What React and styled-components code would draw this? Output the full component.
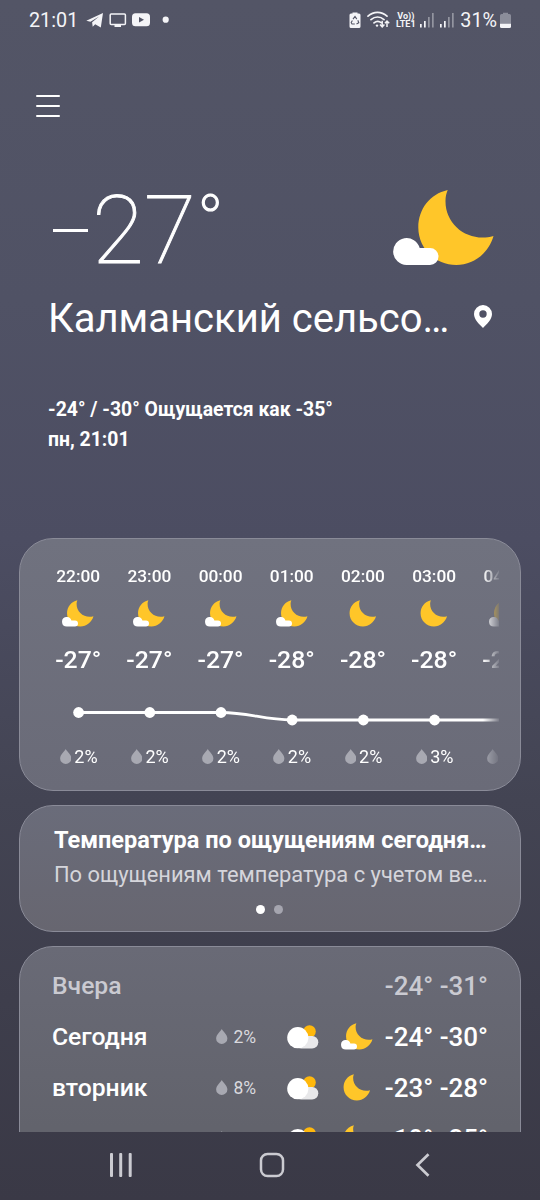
import React from 'react';
import styled, { createGlobalStyle } from 'styled-components';

const hours = [
  { time: '22:00', icon: 'cloudMoon', temp: '-27°', rain: '2%' },
  { time: '23:00', icon: 'cloudMoon', temp: '-27°', rain: '2%' },
  { time: '00:00', icon: 'cloudMoon', temp: '-27°', rain: '2%' },
  { time: '01:00', icon: 'cloudMoon', temp: '-28°', rain: '2%' },
  { time: '02:00', icon: 'moon', temp: '-28°', rain: '2%' },
  { time: '03:00', icon: 'moon', temp: '-28°', rain: '3%' },
  { time: '04:00', icon: 'cloudMoon', temp: '-28°', rain: '3%' }
];

const days = [
  { name: 'Вчера', high: '-24°', low: '-31°', past: true },
  { name: 'Сегодня', rain: '2%', night: 'cloudMoon', high: '-24°', low: '-30°' },
  { name: 'вторник', rain: '8%', night: 'moon', high: '-23°', low: '-28°' },
  { name: 'среда', rain: '6%', night: 'moon', high: '-19°', low: '-25°' }
];

const MOON =
  'M54.7 0C37 4 25.3 19 25.3 37.5c0 21 17 37.5 38 37.5 17.5 0 32.5-12 37.2-29-24 7-48.5-10-48-35.5C52.5 7 53.2 3.5 54.7 0z';
const CLOUD =
  'M13.5 75A13.5 13.5 0 1 1 26.7 58H37a8.5 8.5 0 0 1 0 17z';

const BigMoon = () => (
  <svg width="102" height="76" viewBox="0 0 102 76">
    <path fill="#ffc629" d={MOON} />
    <path fill="#fff" d={CLOUD} />
  </svg>
);

// on the small icon the cloud sits closer to the moon
const Moon = ({ cloud }) => (
  <svg width="32" height="27" viewBox="11 0 91 76">
    <path
      transform={cloud ? undefined : 'translate(-7 0)'}
      fill="#ffc629"
      d={MOON}
    />
    {cloud && <path transform="translate(11 0)" fill="#fff" d={CLOUD} />}
  </svg>
);

const SunCloud = () => (
  <svg width="32" height="24" viewBox="0 0 32 24">
    <circle cx="22.5" cy="6.5" r="6.3" fill="#ffb80c" />
    <rect x="8" y="11" width="23.3" height="12.5" rx="6.2" fill="#e8e8ea" />
    <circle cx="10.8" cy="12.7" r="10.6" fill="#fff" />
  </svg>
);

const Drop = () => (
  <svg width="11.5" height="15" viewBox="0 0 12 16">
    <path
      fill="#a8a9b2"
      d="M6 0c.8 2 6 6 6 10a6 6 0 0 1-12 0c0-4 5.2-8 6-10z"
    />
  </svg>
);

const StatusIcons = () => (
  <svg width="86" height="20" viewBox="0 0 86 20" fill="#f4f4f7">
    <path d="M.3 10.800 17 3l-2.200 14.400-5.600-3.200-2.500 2.600-.6-4.600 7-5.700-8.700 5.300z" />
    <rect
      x="24.2"
      y="4"
      width="15.200"
      height="10.600"
      rx="1"
      fill="none"
      stroke="#f4f4f7"
      strokeWidth="1.5"
    />
    <path d="M28.5 15h6.500v2h-6.500z" />
    <rect x="46" y="3.200" width="18" height="13" rx="3.500" />
    <path d="m53 7 5 2.700-5 2.700z" fill="#535566" />
    <circle cx="79.700" cy="9.700" r="3.100" />
  </svg>
);

const Wifi = () => (
  <svg width="23" height="18" viewBox="0 0 23 18" fill="none" stroke="#f4f4f7">
    <g strokeWidth="1.7" strokeLinecap="round">
      <path d="M1 5.200C6.500.2 14.500.2 20 5.200M4 8.700c4-3.600 9.200-3.600 13 0M7 11.900c2.400-2 5-2 7.200-.2" />
    </g>
    <circle cx="10" cy="14.6" r="1.2" fill="#f4f4f7" stroke="none" />
    <path
      strokeWidth="1.5"
      d="M15.200 9.800v6M13 13.600l2.200 2.400 2.200-2.400M20 16v-5.800M17.900 12.300 20 10l2.200 2.300"
    />
  </svg>
);

const Battery = () => (
  <svg width="11" height="17" viewBox="0 0 11 17">
    <path fill="#8b8d9a" d="M3 2V.8h5V2h1.500Q11 2 11 3.500V11H0V3.500Q0 2 1.500 2z" />
    <path fill="#f4f4f7" d="M0 11.500h11v3q0 1.500-1.500 1.500h-8Q0 16 0 14.500z" />
  </svg>
);

const App = () => {
  return (
    <Screen>
      <GlobalStyle />
      <StatusBar>
        <Clock>21:01</Clock>
        <StatusIcons />
        <Spacer />
        <StatusIcon width="12" height="17" viewBox="0 0 12 17">
          <path
            fill="#f4f4f7"
            d="M3.500 1.500V.5h5v1H10q1.500 0 1.500 1.500v11.500Q11.500 16 10 16H2Q.5 16 .5 14.500V3Q.5 1.500 2 1.500z"
          />
          <path
            fill="none"
            stroke="#535566"
            strokeWidth="1.1"
            d="m4 7.200 2-2.700 1.800 2.600M8.800 8.300l1 2.400-2.300 1.300M5.800 12H3l-.8-1.500 1.200-2"
          />
        </StatusIcon>
        <Wifi />
        <Volte>
          <span>Vo))</span>
          <span>LTE1</span>
        </Volte>
        {[1, 2].map(sim => (
          <StatusIcon key={sim} width="14" height="16" viewBox="0 0 14 16" fill="#f4f4f7">
            <path d="M0 12h1.700v3.500H0zM4 9h1.700v6.500H4z" />
            <path opacity=".4" d="M8 5h1.700v10.500H8zM12 1h1.700v14.500H12z" />
          </StatusIcon>
        ))}
        <Percent>31%</Percent>
        <Battery />
      </StatusBar>

      <MenuButton aria-label="Меню">
        <MenuLine />
        <MenuLine />
        <MenuLine />
      </MenuButton>

      <Current>
        <Degrees>
          <Minus />
          <div>
            27<DegreeSign>°</DegreeSign>
          </div>
        </Degrees>
        <BigMoon />
      </Current>
      <Place>
        <City>Калманский сельсо…</City>
        <Pin width="18" height="23" viewBox="0 0 18 23">
          <path
            fill="#fff"
            fillRule="evenodd"
            d="M9 0a9 9 0 0 1 9 9c0 5.500-5.500 10.500-9 14C5.500 19.500 0 14.500 0 9a9 9 0 0 1 9-9zm0 5.300a3.700 3.700 0 1 0 0 7.400 3.700 3.700 0 0 0 0-7.400z"
          />
        </Pin>
      </Place>
      <Details>
        <div>-24° / -30° Ощущается как -35°</div>
        <div>пн, 21:01</div>
      </Details>

      <Cards>
        <HourlyCard>
          <HourlyView>
            <HourRow $height={22}>
              {hours.map(h => (
                <HourTime key={h.time}>{h.time}</HourTime>
              ))}
            </HourRow>
            <HourRow $height={54}>
              {hours.map(h => (
                <HourCell key={h.time}>
                  <Moon cloud={h.icon === 'cloudMoon'} />
                </HourCell>
              ))}
            </HourRow>
            <HourRow $height={38}>
              {hours.map(h => (
                <HourTemp key={h.time}>{h.temp}</HourTemp>
              ))}
            </HourRow>
            <svg width="499" height="61" viewBox="0 0 499 61">
              <path
                d="M35.600 33.500H178c28 0 43 7.500 71.200 7.500H499"
                fill="none"
                stroke="#fff"
                strokeWidth="2.8"
              />
              {hours.map((h, i) => (
                <circle
                  key={h.time}
                  cx={35.6 + i * 71.2}
                  cy={h.temp === '-27°' ? 33.5 : 41}
                  r="5.4"
                  fill="#fff"
                />
              ))}
            </svg>
            <HourRow $height={34}>
              {hours.map(h => (
                <HourRain key={h.time}>
                  <Drop />
                  {h.rain}
                </HourRain>
              ))}
            </HourRow>
          </HourlyView>
        </HourlyCard>

        <TipCard>
          <TipTitle>Температура по ощущениям сегодня…</TipTitle>
          <TipText>По ощущениям температура с учетом ве…</TipText>
          <Dots>
            <Dot $active />
            <Dot />
          </Dots>
        </TipCard>

        <DailyCard>
          {days.map(d => (
            <Day key={d.name} $past={d.past}>
              <DayName>{d.name}</DayName>
              <DayRain>
                {d.rain && <Drop />}
                {d.rain}
              </DayRain>
              <DayIcon>{!d.past && <SunCloud />}</DayIcon>
              <DayIcon>
                {!d.past && <Moon cloud={d.night === 'cloudMoon'} />}
              </DayIcon>
              <DayTemp>
                {d.high} {d.low}
              </DayTemp>
            </Day>
          ))}
        </DailyCard>
      </Cards>

      <NavBar>
        <svg width="24" height="24" viewBox="0 0 24 24" fill="#cbcbd1">
          <rect x="1" y="0" width="3" height="24" rx="1" />
          <rect x="10.2" y="0" width="3" height="24" rx="1" />
          <rect x="19.7" y="0" width="3" height="24" rx="1" />
        </svg>
        <svg width="26" height="26" viewBox="0 0 26 26" fill="none">
          <rect x="2" y="2" width="22" height="22" rx="6.5" stroke="#cbcbd1" strokeWidth="2.5" />
        </svg>
        <svg width="20" height="24" viewBox="-4 0 20 24" fill="none">
          <path d="M13.500 1.300 2.500 12l11 10.700" stroke="#cbcbd1" strokeWidth="2.7" />
        </svg>
      </NavBar>
    </Screen>
  );
};

const GlobalStyle = createGlobalStyle`
  * {
    box-sizing: border-box;
  }
  body {
    margin: 0;
    font-family: Roboto, sans-serif;
    color: #fff;
  }
  svg {
    display: block;
    flex-shrink: 0;
  }
`;

const Screen = styled.div`
  display: flex;
  flex-direction: column;
  width: 540px;
  height: 1200px;
  overflow: hidden;
  white-space: nowrap;
  background: linear-gradient(#535566 0, #505265 300px, #4c4d62 540px, #434453 800px, #3e3e4c 1000px, #3a3946 1200px);
`;

const StatusBar = styled.div`
  display: flex;
  align-items: center;
  height: 40px;
  padding: 0 29px;
  color: #f4f4f7;
`;

const StatusIcon = styled.svg`
  margin-right: 6px;
`;

const Clock = styled.div`
  width: 57px;
  font-size: 19.8px;
`;

const Spacer = styled.div`
  flex: 1;
`;

const Volte = styled.div`
  display: flex;
  flex-direction: column;
  align-items: center;
  width: 21px;
  margin: 0 4px 0 5px;
  font-size: 9px;
  line-height: 8px;
  font-weight: 700;
`;

const Percent = styled.div`
  margin-right: 3px;
  font-size: 19.8px;
`;

const MenuButton = styled.button`
  display: flex;
  flex-direction: column;
  gap: 7.6px;
  width: 24px;
  margin: 55px 0 0 36px;
  padding: 0;
  border: 0;
  background: none;
`;

const MenuLine = styled.span`
  height: 2.2px;
  border-radius: 1px;
  background: #fff;
`;

const Current = styled.div`
  display: flex;
  justify-content: space-between;
  height: 76px;
  margin: 73px 45px 0 53px;
`;

const Degrees = styled.div`
  display: flex;
  align-items: center;
  padding-top: 7px;
  font-size: 95px;
  font-weight: 100;
  line-height: 76px;
  -webkit-text-stroke: 0.9px #fff;
`;

const DegreeSign = styled.span`
  margin-left: 1px;
  font-size: 70px;
  line-height: 0;
  vertical-align: 18px;
  -webkit-text-stroke: 1.2px #fff;
`;

const Minus = styled.span`
  width: 35px;
  height: 3px;
  margin: 0 4px 2px 0;
  background: #fff;
`;

const Place = styled.div`
  display: flex;
  align-items: center;
  justify-content: space-between;
  height: 56px;
  margin: 25px 48px 0 48px;
`;

const City = styled.h1`
  margin: 0;
  font-size: 40px;
  font-weight: 400;
`;

const Pin = styled.svg`
  margin-bottom: 4px;
`;

const Details = styled.div`
  height: 60px;
  margin: 48px 48px 0;
  font-size: 19.4px;
  line-height: 30px;
  font-weight: 700;
`;

const Cards = styled.main`
  display: flex;
  flex-direction: column;
  flex: 1;
  gap: 14px;
  min-height: 0;
  margin: 83px 19px 0;
  overflow: hidden;
`;

const Card = styled.section`
  flex-shrink: 0;
  border: 1px solid #8a8b98;
  border-radius: 34px;
`;

const HourlyCard = styled(Card)`
  height: 253px;
  padding: 26px 21px 0 22.6px;
  background: linear-gradient(#70727f, #6a6b78);
`;

const HourlyView = styled.div`
  overflow: hidden;
  mask-image: linear-gradient(90deg, #000 440px, transparent 458px);
`;

const HourRow = styled.div`
  display: flex;
  align-items: center;
  height: ${props => props.$height}px;
`;

const HourCell = styled.div`
  display: flex;
  align-items: center;
  justify-content: center;
  flex: 0 0 71.2px;
`;

const HourTime = styled(HourCell)`
  font-size: 17.3px;
  font-weight: 500;
`;

const HourTemp = styled(HourCell)`
  font-size: 24.8px;
  font-weight: 500;
`;

const HourRain = styled(HourCell)`
  gap: 3px;
  padding-left: 1px;
  font-size: 18px;
`;

const TipCard = styled(Card)`
  height: 127px;
  padding: 18px 30px 0 34px;
  background: linear-gradient(#6a6c7a, #676670);
`;

const TipTitle = styled.div`
  font-size: 23.5px;
  line-height: 33px;
  font-weight: 700;
`;

const TipText = styled.div`
  margin-top: 1px;
  color: #d5d5db;
  font-size: 21.9px;
  line-height: 34px;
`;

const Dots = styled.div`
  display: flex;
  justify-content: center;
  gap: 9px;
  margin: 13px 0 0 -5px;
`;

const Dot = styled.span`
  width: 9px;
  height: 9px;
  border-radius: 50%;
  background: ${props => (props.$active ? '#fff' : '#a5a5af')};
`;

const DailyCard = styled(Card)`
  height: 300px;
  padding: 13.5px 32px 0;
  background: linear-gradient(#696a76, #62636c 180px);
`;

const Day = styled.div`
  display: flex;
  align-items: center;
  height: 51px;
  color: ${props => (props.$past ? '#cacad1' : '#fff')};
  font-size: 24.7px;
  font-weight: 500;
`;

const DayName = styled.div`
  width: 164px;
`;

const DayRain = styled.div`
  display: flex;
  align-items: center;
  gap: 6px;
  width: 71px;
  color: #d9d9de;
  font-size: 17.5px;
  font-weight: 400;
`;

const DayIcon = styled.div`
  flex-shrink: 0;
  width: 32px;
  margin-right: 22px;
`;

const DayTemp = styled.div`
  flex: 1;
  margin-left: -16px;
  font-size: 26px;
  text-align: right;
`;

const NavBar = styled.nav`
  display: flex;
  align-items: center;
  justify-content: space-between;
  height: 68px;
  padding: 0 109px 2px;
`;

export default App;
